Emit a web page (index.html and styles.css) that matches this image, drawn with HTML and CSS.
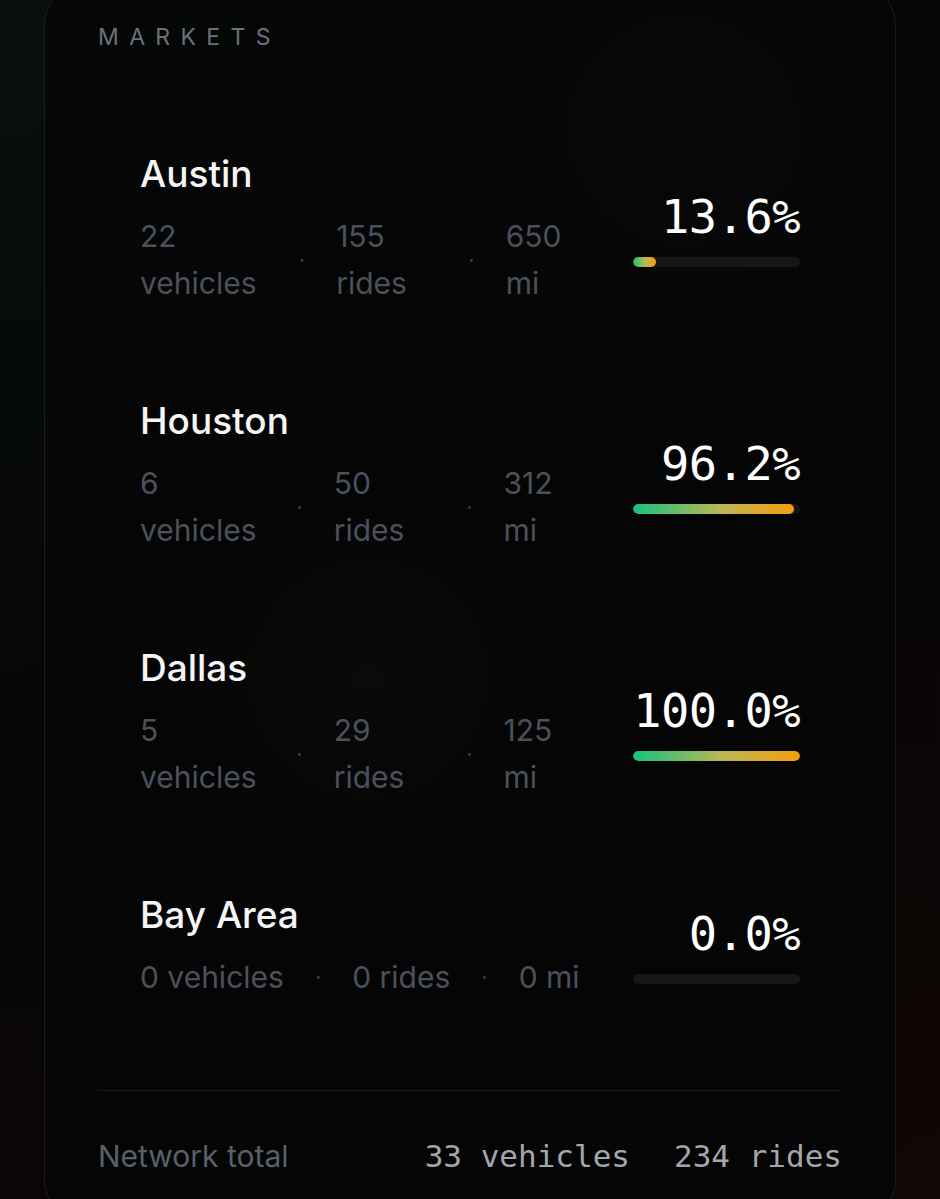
FILE: index.html
```html
<!DOCTYPE html>
<html lang="en">
<head>
    <meta charset="UTF-8">
    <meta name="viewport" content="width=device-width, initial-scale=1.0">
    <title>Markets</title>
    <link rel="stylesheet" href="styles.css">
</head>
<body>
    <main class="panel">
        <h2 class="panel-title">Markets</h2>

        <ul class="market-list">
            <li class="market">
                <div class="market-info">
                    <h3 class="market-name">Austin</h3>
                    <div class="market-stats">
                        <span class="stat">22 vehicles</span>
                        <span class="sep">·</span>
                        <span class="stat">155 rides</span>
                        <span class="sep">·</span>
                        <span class="stat">650 mi</span>
                    </div>
                </div>
                <div class="market-util">
                    <div class="util-value">13.6%</div>
                    <div class="util-track"><div class="util-fill" style="width: 13.6%"></div></div>
                </div>
            </li>

            <li class="market">
                <div class="market-info">
                    <h3 class="market-name">Houston</h3>
                    <div class="market-stats">
                        <span class="stat">6 vehicles</span>
                        <span class="sep">·</span>
                        <span class="stat">50 rides</span>
                        <span class="sep">·</span>
                        <span class="stat">312 mi</span>
                    </div>
                </div>
                <div class="market-util">
                    <div class="util-value">96.2%</div>
                    <div class="util-track"><div class="util-fill" style="width: 96.2%"></div></div>
                </div>
            </li>

            <li class="market">
                <div class="market-info">
                    <h3 class="market-name">Dallas</h3>
                    <div class="market-stats">
                        <span class="stat">5 vehicles</span>
                        <span class="sep">·</span>
                        <span class="stat">29 rides</span>
                        <span class="sep">·</span>
                        <span class="stat">125 mi</span>
                    </div>
                </div>
                <div class="market-util">
                    <div class="util-value">100.0%</div>
                    <div class="util-track"><div class="util-fill" style="width: 100%"></div></div>
                </div>
            </li>

            <li class="market">
                <div class="market-info">
                    <h3 class="market-name">Bay Area</h3>
                    <div class="market-stats">
                        <span class="stat">0 vehicles</span>
                        <span class="sep">·</span>
                        <span class="stat">0 rides</span>
                        <span class="sep">·</span>
                        <span class="stat">0 mi</span>
                    </div>
                </div>
                <div class="market-util">
                    <div class="util-value">0.0%</div>
                    <div class="util-track"><div class="util-fill" style="width: 0%"></div></div>
                </div>
            </li>
        </ul>

        <footer class="panel-footer">
            <span class="footer-label">Network total</span>
            <span class="footer-totals">
                <span>33 vehicles</span>
                <span>234 rides</span>
            </span>
        </footer>
    </main>
</body>
</html>
```

FILE: styles.css
```css
body {
    margin: 0;
    min-height: 100vh;
    font-family: Inter, "Noto Sans", sans-serif;
    color: #f4f4f5;
    background-color: #040505;
    background-image:
        radial-gradient(ellipse at 0% 0%, rgba(20, 48, 36, 0.25), transparent 45%),
        radial-gradient(ellipse at 100% 100%, rgba(40, 10, 8, 0.35), transparent 55%),
        radial-gradient(ellipse at 0% 100%, rgba(30, 10, 8, 0.25), transparent 50%);
    overflow: hidden;
}

.panel {
    margin: -20px 44px 0;
    padding: 42px 53px 48px;
    border: 1.5px solid #1c1d1e;
    border-radius: 46px;
    background-color: rgba(5, 5, 5, 0.9);
    background-image:
        radial-gradient(circle at 38% 56%, rgba(255, 255, 255, 0.018), transparent 22%),
        radial-gradient(circle at 75% 12%, rgba(255, 255, 255, 0.012), transparent 25%);
}

.panel-title {
    margin: 0;
    font-size: 23px;
    line-height: 28px;
    font-weight: 400;
    letter-spacing: 0.45em;
    text-transform: uppercase;
    color: #6b717c;
}

.market-list {
    list-style: none;
    margin: 55px 0 0;
    padding: 0;
}

.market {
    display: flex;
    align-items: center;
    gap: 50px;
    padding: 46px 42px;
}

.market-info {
    flex: 1;
    min-width: 0;
}

.market-name {
    margin: 0;
    font-size: 37px;
    line-height: 44px;
    font-weight: 500;
    color: #f5f5f5;
}

.market-stats {
    display: flex;
    gap: 31px;
    margin-top: 17px;
    font-size: 30px;
    line-height: 47px;
    color: #4b515c;
}

.stat {
    flex: 0 1 auto;
    min-width: 0;
}

.sep {
    flex: none;
    align-self: center;
    color: #3a3f47;
    font-size: 22px;
}

.market-util {
    flex: none;
    width: 167px;
}

.util-value {
    font-family: "DejaVu Sans Mono", "Liberation Mono", monospace;
    font-size: 47px;
    line-height: 48px;
    letter-spacing: -0.5px;
    text-align: right;
    color: #ffffff;
}

.util-track {
    margin-top: 16px;
    height: 10px;
    border-radius: 5px;
    background-color: #161616;
    overflow: hidden;
}

.util-fill {
    height: 100%;
    border-radius: 5px;
    background: linear-gradient(90deg, #17c27f, #bdb654 55%, #f59e0b);
}

.panel-footer {
    display: flex;
    justify-content: space-between;
    align-items: baseline;
    margin-top: 43px;
    padding-top: 45px;
    border-top: 1.5px solid #1a1a1b;
}

.footer-label {
    font-size: 30px;
    line-height: 40px;
    color: #59606b;
}

.footer-totals {
    display: flex;
    gap: 44px;
    font-family: "DejaVu Sans Mono", "Liberation Mono", monospace;
    font-size: 31px;
    line-height: 40px;
    color: #a3a6ab;
}
```
